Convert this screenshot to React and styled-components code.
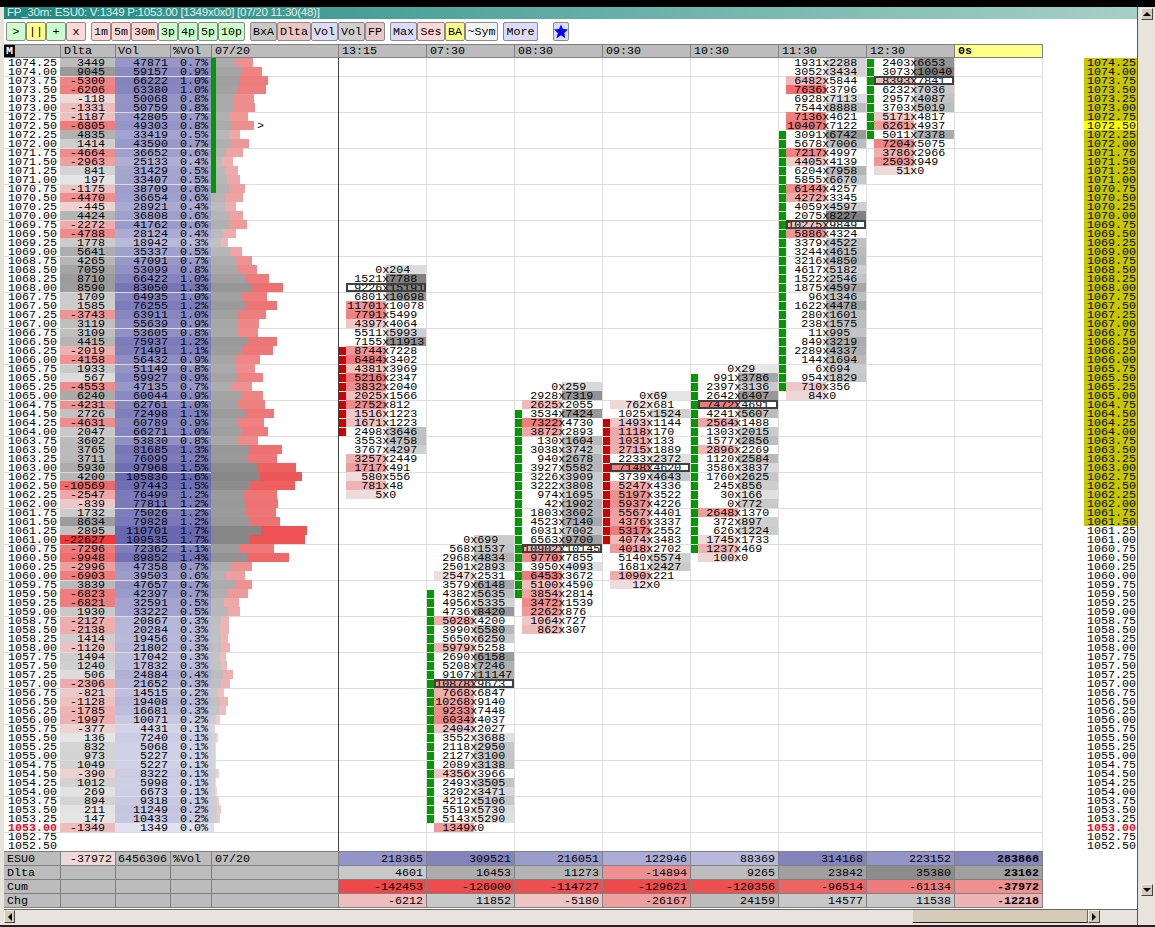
import React from 'react';
import styled, { createGlobalStyle } from 'styled-components';

const GlobalStyle = createGlobalStyle`
  html, body { margin: 0; padding: 0; background: #e8e4dc; overflow: hidden; }
  * { box-sizing: border-box; }
`;

const MONO = `"Liberation Mono", "Courier New", monospace`;

// price, delta, vol, pct, gray end, red end (x px)
const LADDER = `
1074.25 3449 47871 0.7 235 253
1074.00 9045 59157 0.9 242 262
1073.75 -5300 66222 1.0 239 268
1073.50 -6206 63380 1.0 237 266
1073.25 -118 50068 0.8 234 254
1073.00 -1331 50759 0.8 234 255
1072.75 -1187 42805 0.7 230 248
1072.50 -6805 49303 0.8 231 254
1072.25 4835 33419 0.5 229 240
1072.00 1414 43590 0.7 232 249
1071.75 -4664 36652 0.6 226 243
1071.50 -2963 25133 0.4 222 233
1071.25 841 31429 0.5 226 238
1071.00 197 33407 0.5 227 240
1070.75 -1175 38709 0.6 229 245
1070.50 -4470 36654 0.6 226 243
1070.25 -445 28921 0.4 225 236
1070.00 4424 36808 0.6 230 243
1069.75 -2272 41762 0.6 229 247
1069.50 -4788 28124 0.4 223 236
1069.25 1778 18942 0.3 221 228
1069.00 5641 35337 0.5 230 242
1068.75 4265 47091 0.7 235 252
1068.50 7059 53099 0.8 238 257
1068.25 8710 66422 1.0 245 269
1068.00 8590 83050 1.3 252 283
1067.75 1709 64935 1.0 241 267
1067.50 1585 76255 1.2 246 277
1067.25 -3743 63911 1.0 238 266
1067.00 3119 55639 0.9 238 259
1066.75 3109 53605 0.8 237 258
1066.50 4415 75937 1.2 247 277
1066.25 -2019 71491 1.1 242 273
1066.00 -4158 56432 0.9 235 260
1065.75 1933 51149 0.8 235 255
1065.50 567 59927 0.9 238 263
1065.25 -4553 47135 0.7 231 252
1065.00 6240 60044 0.9 241 263
1064.75 -4231 62761 1.0 238 265
1064.50 2726 72498 1.1 245 274
1064.25 -4631 60789 0.9 237 264
1064.00 2047 66271 1.0 242 268
1063.75 3602 53830 0.8 237 258
1063.50 3765 81685 1.3 249 282
1063.25 3711 76099 1.2 247 277
1063.00 5930 97968 1.5 257 296
1062.75 4200 105836 1.6 260 302
1062.50 -10569 97443 1.5 250 295
1062.25 -2547 76499 1.2 244 277
1062.00 -839 77811 1.2 246 278
1061.75 1732 75026 1.2 245 276
1061.50 8634 79828 1.2 250 280
1061.25 2895 110701 1.7 261 307
1061.00 -22627 109535 1.7 250 305
1060.75 -7296 72362 1.1 240 274
1060.50 -9948 89852 1.4 247 289
1060.25 -2996 47358 0.7 232 252
1060.00 -6903 39503 0.6 226 245
1059.75 3839 47657 0.7 235 252
1059.50 -6823 42397 0.7 228 248
1059.25 -6821 32591 0.5 224 239
1059.00 1930 33222 0.5 228 240
1058.75 -2127 20867 0.3 221 229
1058.50 -2138 20284 0.3 220 229
1058.25 1414 19456 0.3 221 228
1058.00 -1120 21802 0.3 221 230
1057.75 1494 17042 0.3 220 226
1057.50 1240 17832 0.3 221 227
1057.25 506 24884 0.4 223 233
1057.00 -2306 21652 0.3 221 230
1056.75 -821 14515 0.2 218 224
1056.50 -1128 19408 0.3 220 228
1056.25 -1785 16681 0.3 219 226
1056.00 -1997 10071 0.2 216 220
1055.75 -377 4431 0.1 214 215
1055.50 136 7240 0.1 216 218
1055.25 832 5068 0.1 215 216
1055.00 973 5227 0.1 215 216
1054.75 1049 5227 0.1 215 216
1054.50 -390 8322 0.1 216 219
1054.25 1012 5998 0.1 215 216
1054.00 269 6673 0.1 215 217
1053.75 894 9318 0.1 217 219
1053.50 211 11249 0.2 217 221
1053.25 147 10433 0.2 217 220
1053.00 -1349 1349 0.0 214 214
1052.75
1052.50`.trim().split('\n').map((line) => {
  const [price, delta, vol, pct, gray, red] = line.split(' ');
  return { price, delta: delta && +delta, vol: vol && +vol, pct, gray: +gray, red: +red };
});

// a * marks the boxed point of control
const COLUMNS = [
  { time: '13:15', start: 23, marker: [9, 18, 'red'], cells: '0x204 1521x7788 *9226x15191 6801x10698 11701x10078 7791x5499 4397x4064 5511x5993 7155x11913 8744x7228 6484x3402 4381x3969 5216x2347 3832x2040 2025x1566 2752x812 1516x1223 1671x1223 2498x3646 3553x4758 3767x4297 3257x2449 1717x491 580x556 781x48 5x0' },
  { time: '07:30', start: 53, marker: [6, 31, 'green'], cells: '0x699 568x1537 2968x4834 2501x2893 2547x2531 3579x6148 4382x5635 4956x5335 4736x8420 5028x4200 3990x5580 5650x6250 5979x5258 2690x6158 5208x7246 9107x11147 *10878x9673 7668x6847 10268x9140 9233x7448 6034x4037 2404x2027 3552x3688 2118x2950 2127x3100 2089x3138 4356x3966 2493x3505 3202x3471 4212x5106 5519x5730 5143x5290 1349x0' },
  { time: '08:30', start: 36, marker: [3, 23, 'green'], cells: '0x259 2928x7319 2625x2055 3534x7424 7322x4730 3872x2893 130x1604 3038x3742 940x2678 3927x5582 3226x3909 3222x3808 974x1695 42x1902 1803x3602 4523x7140 6031x7002 6563x9700 *10902x10145 9770x7855 3950x4093 6453x3672 5100x4590 3854x2814 3472x1539 2262x876 1064x727 862x307' },
  { time: '09:30', start: 37, marker: [3, 16, 'red'], cells: '0x69 762x681 1025x1524 1493x1144 1118x170 1031x133 2715x1889 2233x2372 *7148x4620 3739x4643 5247x4336 5197x3522 5937x4226 5567x4401 4376x3337 5317x2552 4074x3483 4018x2702 5140x5574 1681x2427 1090x221 12x0' },
  { time: '10:30', start: 34, marker: [1, 20, 'green'], cells: '0x29 991x3786 2397x3136 2642x6407 *7472x4691 4241x5607 2564x1488 1303x2015 1577x2856 2896x2269 1120x2584 3586x3837 1760x2625 245x856 30x166 0x772 2648x1370 372x897 626x1224 1745x1733 1237x469 100x0' },
  { time: '11:30', start: 0, marker: [8, 36, 'green'], cells: '1931x2288 3052x3434 6482x5844 7636x3796 6928x7113 7544x8888 7136x4621 10407x7122 3091x6742 5678x7006 7217x4997 4405x4139 6204x7958 5855x6670 6144x4257 4272x3345 4059x4597 2075x8227 *10275x9849 5886x4324 3379x4522 3244x4615 3216x4850 4617x5182 1522x2546 1875x4597 96x1346 1622x4478 280x1601 238x1575 11x995 849x3219 2289x4337 144x1694 6x694 954x1829 710x356 84x0' },
  { time: '12:30', start: 0, marker: [0, 8, 'green'], cells: '2403x6653 3073x10040 *8393x7841 6232x7036 2957x4087 3703x5019 5171x4817 6261x4937 5011x7378 7204x5075 3786x2966 2503x949 51x0' },
  { time: '0s', start: 0, cells: '', live: true },
];

const FOOTER = [
  { label: 'ESU0', values: [['218365', '#9494c8'], ['309521', '#8484bc'], ['216051', '#9c9ccc'], ['122946', '#acacd8'], ['88369', '#b8b8dc'], ['314168', '#8484bc'], ['223152', '#9494c8'], ['283868', '#8888c0']] },
  { label: 'Dlta', values: [['4601', '#c8c8c8'], ['16453', '#acacac'], ['11273', '#b4b4b4'], ['-14894', '#ee9090'], ['9265', '#bcbcbc'], ['23842', '#a0a0a0'], ['35380', '#8c8c8c'], ['23162', '#a0a0a0']] },
  { label: 'Cum', values: [['-142453', '#ee4848'], ['-126000', '#ee4c4c'], ['-114727', '#ee5050'], ['-129621', '#ee4a4a'], ['-120356', '#ee5050'], ['-96514', '#ee6464'], ['-61134', '#ee7c7c'], ['-37972', '#ee9090']] },
  { label: 'Chg', values: [['-6212', '#eebebe'], ['11852', '#c8c8c8'], ['-5180', '#eec4c4'], ['-26167', '#eea0a0'], ['24159', '#bcbcbc'], ['14577', '#c8c8c8'], ['11538', '#c8c8c8'], ['-12218', '#eeb4b4']] },
];

const TOOLS = [
  [['>', 20, '#ccffcc'], ['||', 20, '#ffff88'], ['+', 20, '#ccffcc'], ['x', 20, '#ffd8d8']],
  [['1m', 20, '#ffd8d8'], ['5m', 20, '#ffd8d8'], ['30m', 27, '#ffd8d8'], ['3p', 20, '#ccffcc'], ['4p', 20, '#ccffcc'], ['5p', 20, '#ccffcc'], ['10p', 27, '#ccffcc']],
  [['BxA', 27, '#c8c8c8'], ['Dlta', 34, '#eac8c8'], ['Vol', 27, '#dcdcf4'], ['Vol', 27, '#d0d0d0'], ['FP', 20, '#eac8c8']],
  [['Max', 27, '#dcdcf8'], ['Ses', 28, '#ffd8d8'], ['BA', 20, '#ffff88'], ['~Sym', 33, '#f4f4f4']],
  [['More', 35, '#dcdcf8']],
];

// piecewise interpolation between [x, y] stops
const ramp = (stops, x) => {
  if (x <= stops[0][0]) return stops[0][1];
  for (let i = 1; i < stops.length; i++) {
    if (x <= stops[i][0]) {
      const [x0, y0] = stops[i - 1];
      const [x1, y1] = stops[i];
      return Math.round(y0 + ((y1 - y0) * (x - x0)) / (x1 - x0));
    }
  }
  return stops[stops.length - 1][1];
};

const GRAY_STOPS = [[100, 0xe6], [841, 0xd4], [1414, 0xce], [3449, 0xbc], [4835, 0xb2], [9045, 0x9a], [15000, 0x80]];
const RED_STOPS = [[50, 0xdc], [118, 0xd9], [1331, 0xbc], [2963, 0x9f], [5300, 0x85], [6805, 0x7d], [10569, 0x6a], [22627, 0x3a]];

const grayOf = (n) => { const g = ramp(GRAY_STOPS, n); return `rgb(${g},${g},${g})`; };
const redOf = (n) => { const g = ramp(RED_STOPS, n); return `rgb(238,${g},${g})`; };
const deltaColor = (d) => (d < 0 ? redOf(-d) : grayOf(d));

const volColor = (v) => {
  const t = ramp([[1349, 225], [5000, 208], [19000, 185], [33000, 163], [48000, 150], [66000, 132], [83000, 118], [110000, 104]], v);
  return `rgb(${t},${t},${Math.round(176 + (t - 104) * 0.52)})`;
};
const histGray = (v) => {
  const g = ramp([[1349, 0xe0], [5000, 0xd4], [20000, 0xc0], [33000, 0xb8], [48000, 0xac], [66000, 0xa0], [83000, 0x96], [110000, 0x86]], v);
  return `rgb(${g},${g},${g})`;
};
const histRed = (v) => {
  const g = ramp([[5000, 0xd8], [20000, 0xb4], [33000, 0xa8], [48000, 0x90], [66000, 0x7c], [83000, 0x70], [110000, 0x52]], v);
  return `rgb(238,${g},${g})`;
};

// styled-components

const Window = styled.div`
  display: flex;
  width: 1155px;
  height: 927px;
  padding-left: 4px;
  background: #e8e4dc;
  border-top: 7px solid #000;
  border-bottom: 2px solid #222;
  font-family: ${MONO};
  font-size: 11.67px;
  line-height: 11px;
  color: #000;
  overflow: hidden;
`;

const Content = styled.div`
  display: flex;
  flex-direction: column;
  width: 1134px;
  background: #fff;
  border-right: 1px solid #555;
`;

const TitleBar = styled.div`
  height: 12px;
  padding-left: 3px;
  background: linear-gradient(to right, #1c8a82, #a6d0c6);
  font-family: "Liberation Sans", Arial, sans-serif;
  font-size: 11.5px;
  line-height: 11px;
  letter-spacing: -0.25px;
  color: #e4efec;
  white-space: nowrap;
`;

const Toolbar = styled.div`
  display: flex;
  gap: 5px;
  height: 25px;
  padding: 3px 0 3px 2px;
`;

const ToolGroup = styled.div`
  display: flex;
`;

const ToolButton = styled.button`
  width: ${(p) => p.$w}px;
  height: 19px;
  padding: 0;
  border: 1px solid #8a8a8a;
  border-radius: 2px;
  background: ${(p) => p.$bg};
  font: inherit;
  line-height: 16px;
  color: #000;
`;

const StarButton = styled(ToolButton)`
  display: flex;
  align-items: center;
  justify-content: center;
  margin-left: 10px;
`;

const HeaderRow = styled.div`
  display: grid;
  grid-template-columns: 57px 55px 55px 41px 127px repeat(8, 88px);
  width: 1039px;
  height: 14px;
  background: #bcbcbc;
  border-top: 1px solid #808080;
  border-bottom: 1px solid #808080;
`;

const HeaderCell = styled.div`
  display: flex;
  align-items: center;
  padding-left: ${(p) => p.$pad ?? 3}px;
  border-right: 1px solid #808080;
  background: ${(p) => p.$bg || 'transparent'};
  font-weight: ${(p) => (p.$bold ? 700 : 400)};
  line-height: 12px;
`;

const MBadge = styled.span`
  width: 11px;
  align-self: stretch;
  background: #000;
  color: #fff;
  text-align: center;
  font-weight: 700;
  line-height: 12px;
`;

const Board = styled.div`
  display: flex;
  height: 793px;
`;

const Ladder = styled.div`
  width: 335px;
  border-right: 1px solid #404040;
`;

const LadderRow = styled.div`
  position: relative;
  display: grid;
  grid-template-columns: 56px 55px 55px 41px 127px;
  grid-template-rows: 9px;
  height: 9px;
  ${(p) => p.$line && `
    &::after {
      content: '';
      position: absolute;
      left: 0;
      right: 0;
      top: 0;
      height: 1px;
      background: #dcdcdc;
    }
  `}
`;

const PriceCell = styled.div`
  padding-left: 4px;
  white-space: nowrap;
  color: ${(p) => (p.$last ? '#ff0022' : '#000')};
  font-weight: ${(p) => (p.$last ? 700 : 400)};
`;

const NumCell = styled.div`
  padding-right: ${(p) => p.$pad}px;
  text-align: right;
  white-space: nowrap;
`;

const HistCell = styled.div`
  position: relative;
  z-index: 1;
  display: flex;
`;

const HistBar = styled.div`
  position: relative;
  height: 9px;
`;

const OpenMark = styled.span`
  margin-left: 3px;
`;

const TrendStripe = styled.div`
  position: absolute;
  left: 0;
  top: 0;
  width: 5px;
  height: 9px;
  background: #009900;
`;

const Chart = styled.div`
  display: flex;
`;

const Period = styled.div`
  width: 88px;
  padding-top: ${(p) => p.$top * 9}px;
  border-right: 1px solid #dedede;
  background: linear-gradient(to bottom, #fff 35px, #dedede 35px) 0 19px / 100% 36px;
`;

const Trade = styled.div`
  display: flex;
  height: 9px;
`;

const Marker = styled.div`
  width: 7px;
  height: 8px;
  margin-top: 1px;
  background: ${(p) => (p.$kind === 'red' ? '#cc0000' : p.$kind === 'green' ? '#009900' : 'transparent')};
`;

const TradeBody = styled.div`
  position: relative;
  display: grid;
  grid-template-columns: 40px 40px;
  grid-template-rows: 9px;
  width: 80px;
  height: 9px;
  ${(p) => p.$poc && `
    &::after {
      content: '';
      position: absolute;
      inset: 0;
      border: 2px solid #404040;
    }
  `}
`;

const BidSide = styled.div`
  display: flex;
  justify-content: flex-end;
  white-space: nowrap;
`;

const BidText = styled.span`
  position: relative;
  margin-right: -3.3px;
`;

const AskSide = styled.div`
  padding-left: 3.3px;
  white-space: nowrap;
`;

const Gutter = styled.div`
  flex: 1;
`;

const PriceAxis = styled.div`
  width: 53px;
`;

const AxisRow = styled.div`
  height: 9px;
  padding-left: 3px;
  white-space: nowrap;
  background: ${(p) => p.$bg};
  color: ${(p) => (p.$last ? '#ff0022' : '#000')};
  font-weight: ${(p) => (p.$last ? 700 : 400)};
`;

const Totals = styled.div`
  width: 1039px;
  border-top: 1px solid #808080;
`;

const TotalsRow = styled.div`
  display: grid;
  grid-template-columns: 57px 55px 55px 41px 127px repeat(8, 88px);
  height: 14px;
  background: #bcbcbc;
  border-bottom: 1px solid #808080;
`;

const TotalsCell = styled.div`
  display: flex;
  align-items: center;
  justify-content: ${(p) => (p.$right ? 'flex-end' : 'flex-start')};
  padding: 0 3px 0 ${(p) => (p.$pad ?? 3)}px;
  border-right: 1px solid #808080;
  background: ${(p) => p.$bg || 'transparent'};
  font-weight: ${(p) => (p.$bold ? 700 : 400)};
  line-height: 12px;
  white-space: nowrap;
`;

const HScroll = styled.div`
  display: flex;
  flex: 1;
  margin-top: 1px;
  padding-bottom: 2px;
  background: #e8e4dc;
  border-top: 1px solid #666;
`;

const ScrollTrack = styled.div`
  display: flex;
  padding-left: 898px;
`;

const ScrollArrow = styled.div`
  display: flex;
  align-items: center;
  justify-content: center;
  flex: none;
  width: ${(p) => p.$w || 12}px;
  height: ${(p) => p.$h || 13}px;
  background: #d4cbb8;
  border: 1px solid;
  border-color: #f4f0e8 #444 #444 #f4f0e8;
`;

const ScrollThumb = styled.div`
  width: 175px;
  height: 13px;
  background: #d4cbb8;
  border-bottom: 1px solid #222;
  border-right: 1px solid #666;
`;

const VScroll = styled.div`
  display: flex;
  flex-direction: column;
  flex: 1;
  align-items: center;
  padding-top: 1px;
`;

const VSpacer = styled.div`
  flex: 1;
`;

const VFoot = styled.div`
  height: 29px;
`;

const Tri = ({ dir }) => {
  const points = { left: '4,0 4,8 0,4', right: '0,0 0,8 4,4', up: '0,4 8,4 4,0', down: '0,0 8,0 4,4' }[dir];
  const vertical = dir === 'up' || dir === 'down';
  return (
    <svg width={vertical ? 8 : 4} height={vertical ? 4 : 8}>
      <polygon points={points} fill="#000" />
    </svg>
  );
};

const Star = () => (
  <svg width="15" height="15" viewBox="0 0 20 20">
    <polygon points="10,0 12.8,6.6 20,7.2 14.6,12 16.3,19.5 10,15.5 3.7,19.5 5.4,12 0,7.2 7.2,6.6" fill="#0000ff" />
  </svg>
);

function Cell({ text, kind }) {
  const poc = text.startsWith('*');
  const [bid, ask] = text.replace('*', '').split('x').map(Number);
  const factor = 2.5;
  const diff = Math.abs(bid - ask) * factor;
  const bidWins = bid >= ask;
  return (
    <Trade>
      <Marker $kind={kind} />
      <TradeBody $poc={poc}>
        <BidSide style={{ background: bidWins ? redOf(Math.max(diff, 30)) : 'transparent' }}>
          <BidText>{bid}x</BidText>
        </BidSide>
        <AskSide style={{ background: bidWins ? 'transparent' : grayOf(diff) }}>{ask}</AskSide>
      </TradeBody>
    </Trade>
  );
}

function App() {
  return (
    <>
      <GlobalStyle />
      <Window>
        <Content>
          <TitleBar>FP_30m: ESU0: V:1349 P:1053.00 [1349x0x0] [07/20 11:30(48)]</TitleBar>
          <Toolbar>
            {TOOLS.map((group, g) => (
              <ToolGroup key={g}>
                {group.map(([label, w, bg], i) => (
                  <ToolButton key={i} $w={w} $bg={bg}>{label}</ToolButton>
                ))}
              </ToolGroup>
            ))}
            <StarButton $w={16} $bg="#dcdcf8"><Star /></StarButton>
          </Toolbar>

          <HeaderRow>
            <HeaderCell $pad={0}><MBadge>M</MBadge></HeaderCell>
            <HeaderCell>Dlta</HeaderCell>
            <HeaderCell $pad={2}>Vol</HeaderCell>
            <HeaderCell $pad={2}>%Vol</HeaderCell>
            <HeaderCell>07/20</HeaderCell>
            {COLUMNS.map((c) => (
              <HeaderCell key={c.time} $bg={c.live ? '#ffff88' : ''} $bold={c.live}>{c.time}</HeaderCell>
            ))}
          </HeaderRow>

          <Board>
            <Ladder>
              {LADDER.map((r, i) => (
                <LadderRow key={r.price} $line={i % 4 === 2}>
                  <PriceCell $last={r.price === '1053.00'}>{r.price}</PriceCell>
                  {r.vol ? (
                    <>
                      <NumCell $pad={10} style={{ background: deltaColor(r.delta) }}>{r.delta}</NumCell>
                      <NumCell $pad={2} style={{ background: volColor(r.vol) }}>{r.vol}</NumCell>
                      <NumCell $pad={3} style={{ background: volColor(r.vol) }}>{r.pct}%</NumCell>
                      <HistCell>
                        <HistBar style={{ width: r.gray - 211, background: histGray(r.vol) }}>
                          {i < 15 && <TrendStripe />}
                        </HistBar>
                        <HistBar style={{ width: r.red - r.gray, background: histRed(r.vol) }} />
                        {r.price === '1072.50' && <OpenMark>&gt;</OpenMark>}
                      </HistCell>
                    </>
                  ) : null}
                </LadderRow>
              ))}
            </Ladder>

            <Chart>
              {COLUMNS.map((c) => (
                <Period key={c.time} $top={c.start}>
                  {c.cells && c.cells.split(' ').map((text, i) => (
                    <Cell
                      key={i}
                      text={text}
                      kind={c.marker && i >= c.marker[0] && i <= c.marker[1] ? c.marker[2] : ''}
                    />
                  ))}
                </Period>
              ))}
            </Chart>

            <Gutter />

            <PriceAxis>
              {LADDER.map((r, i) => (
                <AxisRow
                  key={r.price}
                  $last={r.price === '1053.00'}
                  $bg={r.price === '1072.50' ? '#ffff00' : i <= 51 ? '#c8c600' : '#fff'}
                >
                  {r.price}
                </AxisRow>
              ))}
            </PriceAxis>
          </Board>

          <Totals>
            {FOOTER.map((row, r) => (
              <TotalsRow key={row.label}>
                <TotalsCell>{row.label}</TotalsCell>
                <TotalsCell $right $bg={r === 0 ? '#efd8d8' : ''}>{r === 0 && '-37972'}</TotalsCell>
                <TotalsCell $right>{r === 0 && '6456306'}</TotalsCell>
                <TotalsCell $pad={2}>{r === 0 && '%Vol'}</TotalsCell>
                <TotalsCell>{r === 0 && '07/20'}</TotalsCell>
                {row.values.map(([value, bg], i) => (
                  <TotalsCell key={i} $right $bg={bg} $bold={i === 7}>{value}</TotalsCell>
                ))}
              </TotalsRow>
            ))}
          </Totals>

          <HScroll>
            <ScrollArrow $w={11}><Tri dir="left" /></ScrollArrow>
            <ScrollTrack>
              <ScrollThumb />
              <ScrollArrow><Tri dir="right" /></ScrollArrow>
            </ScrollTrack>
          </HScroll>
        </Content>

        <VScroll>
          <ScrollArrow $w={12} $h={12}><Tri dir="up" /></ScrollArrow>
          <VSpacer />
          <ScrollArrow $w={12} $h={12}><Tri dir="down" /></ScrollArrow>
          <VFoot />
        </VScroll>
      </Window>
    </>
  );
}

export default App;
